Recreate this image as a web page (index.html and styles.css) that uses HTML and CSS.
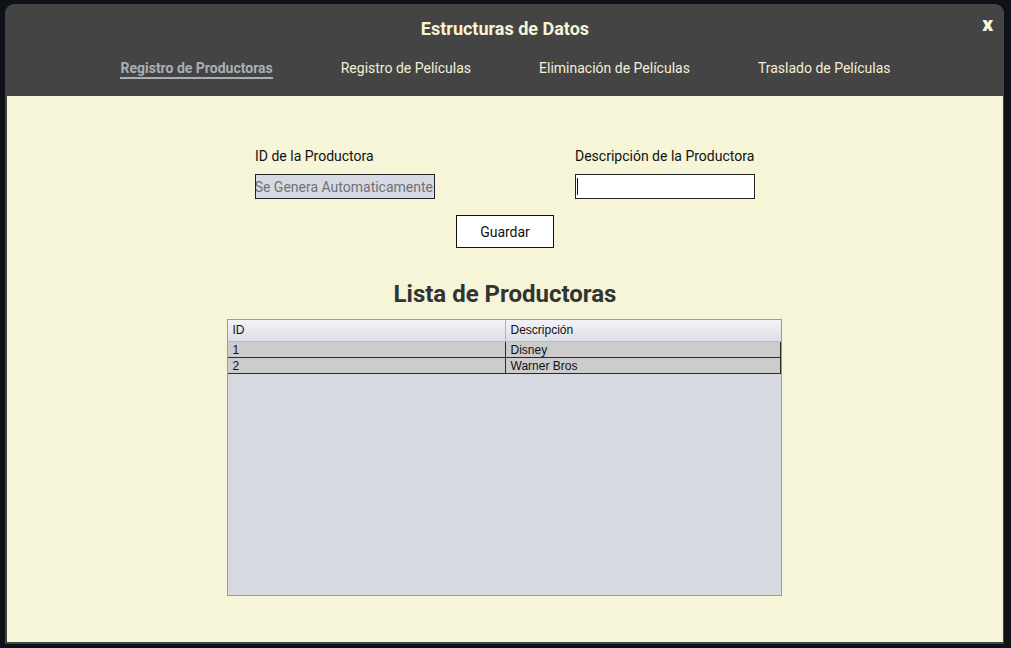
FILE: index.html
```html
<!DOCTYPE html>
<html lang="es">
<head>
<meta charset="utf-8">
<title>Estructuras de Datos</title>
<link rel="stylesheet" href="styles.css">
</head>
<body>
<div class="window">
  <header class="header">
    <h1 class="title">Estructuras de Datos</h1>
    <span class="close">x</span>
    <nav class="tabs">
      <span class="tab active">Registro de Productoras</span>
      <span class="tab">Registro de Películas</span>
      <span class="tab">Eliminación de Películas</span>
      <span class="tab">Traslado de Películas</span>
    </nav>
  </header>
  <main class="content">
    <div class="form">
      <div class="field">
        <label class="label">ID de la Productora</label>
        <div class="input disabled"><span class="ph">Se Genera Automaticamente</span></div>
      </div>
      <div class="field">
        <label class="label">Descripción de la Productora</label>
        <div class="input"><span class="caret"></span></div>
      </div>
    </div>
    <button class="btn">Guardar</button>
    <h2 class="heading">Lista de Productoras</h2>
    <div class="table">
      <div class="row head"><div class="cell">ID</div><div class="cell">Descripción</div></div>
      <div class="row data"><div class="cell">1</div><div class="cell">Disney</div></div>
      <div class="row data"><div class="cell">2</div><div class="cell">Warner Bros</div></div>
    </div>
  </main>
</div>
</body>
</html>
```
FILE: styles.css
```css
* { box-sizing: border-box; }
html, body { margin: 0; padding: 0; }
body {
  background: #0f1119;
  width: 1011px;
  height: 648px;
  overflow: hidden;
  font-family: Roboto, "Liberation Sans", sans-serif;
}
.window {
  margin: 4px 0 0 5px;
  width: 999px;
  height: 640px;
  background: #444444;
  border-radius: 9px 9px 0 0;
  padding: 0 1px 2px 2px;
  display: flex;
  flex-direction: column;
}
.header {
  position: relative;
  height: 92px;
  flex: none;
  display: flex;
  flex-direction: column;
  align-items: center;
}
.title {
  margin: 14px 0 0 0;
  font-size: 18px;
  font-weight: 700;
  line-height: 22px;
  color: #f8f3d6;
}
.close {
  position: absolute;
  right: 10px;
  top: 9px;
  font-size: 21px;
  font-weight: 900;
  color: #fbf6dc;
  line-height: 22px;
}
.tabs {
  margin-top: 19px;
  display: flex;
  gap: 68px;
  margin-left: 1px;
}
.tab {
  font-size: 14px;
  line-height: 18px;
  color: #f3efd8;
  padding-bottom: 0;
  border-bottom: 2px solid transparent;
}
.tab.active {
  font-weight: 700;
  color: #a8aeb5;
  border-bottom-color: #a8aeb5;
}
.content {
  flex: 1;
  background: #f6f5d8;
  display: flex;
  flex-direction: column;
  align-items: center;
  padding-top: 50px;
}
.form {
  display: flex;
  gap: 140px;
}
.field {
  width: 180px;
  display: flex;
  flex-direction: column;
}
.label {
  font-size: 14px;
  line-height: 20px;
  color: #111;
  margin-bottom: 8px;
}
.input {
  height: 25px;
  border: 1px solid #222;
  background: #fff;
  display: flex;
  align-items: center;
  overflow: hidden;
  white-space: nowrap;
}
.input.disabled {
  background: #d7dae2;
  justify-content: flex-end;
}
.ph {
  font-size: 14px;
  color: #6f7176;
  padding-right: 1px;
}
.caret {
  width: 1px;
  height: 17px;
  background: #111;
  margin-left: 1px;
}
.btn {
  margin-top: 16px;
  width: 98px;
  height: 33px;
  background: #fff;
  border: 1px solid #111;
  font-family: Roboto, "Liberation Sans", sans-serif;
  font-size: 14px;
  color: #111;
  padding: 0;
}
.heading {
  margin: 31px 0 0 0;
  font-size: 24px;
  font-weight: 700;
  line-height: 30px;
  color: #333333;
}
.table {
  margin-top: 10px;
  margin-right: 2px;
  width: 555px;
  height: 277px;
  border: 1px solid #999aa0;
  background: #d6d9e0;
  font-family: "Liberation Sans", Arial, sans-serif;
  font-size: 12px;
  color: #111;
}
.row {
  display: grid;
  grid-template-columns: 277px 1fr;
}
.row.head {
  height: 22px;
  background: linear-gradient(#f2f3f7, #dcdfe6);
  border-bottom: 1px solid #b8bcc4;
}
.row.head .cell {
  line-height: 21px;
  padding-left: 5px;
}
.row.head .cell + .cell {
  border-left: 1px solid #b0b3ba;
}
.row.data {
  height: 16px;
  background: #cccccc;
  border-bottom: 1px solid #2a2a2a;
  border-right: 1px solid #2a2a2a;
}
.row.data .cell {
  line-height: 16px;
  padding-left: 5px;
}
.row.data .cell + .cell {
  border-left: 1px solid #2a2a2a;
}
```
